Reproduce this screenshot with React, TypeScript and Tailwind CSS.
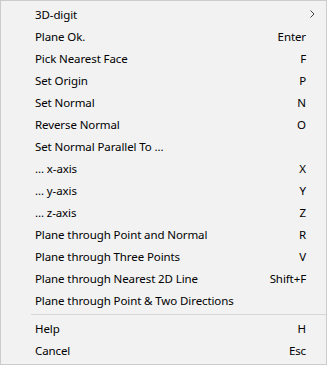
type Item = { label: string; key?: string; sub?: boolean } | 'sep';

const items: Item[] = [
  { label: '3D-digit', sub: true },
  { label: 'Plane Ok.', key: 'Enter' },
  { label: 'Pick Nearest Face', key: 'F' },
  { label: 'Set Origin', key: 'P' },
  { label: 'Set Normal', key: 'N' },
  { label: 'Reverse Normal', key: 'O' },
  { label: 'Set Normal Parallel To ...' },
  { label: '... x-axis', key: 'X' },
  { label: '... y-axis', key: 'Y' },
  { label: '... z-axis', key: 'Z' },
  { label: 'Plane through Point and Normal', key: 'R' },
  { label: 'Plane through Three Points', key: 'V' },
  { label: 'Plane through Nearest 2D Line', key: 'Shift+F' },
  { label: 'Plane through Point & Two Directions' },
  'sep',
  { label: 'Help', key: 'H' },
  { label: 'Cancel', key: 'Esc' },
];

export default function App() {
  return (
    <div
      className="w-[327px] h-[365px] bg-[#f2f2f2] border border-[#cccccc] pt-[2px] text-[11.5px] tracking-[-0.1px] text-black"
      style={{ fontFamily: '"Noto Sans", "Open Sans", sans-serif' }}
    >
      {items.map((item, i) =>
        item === 'sep' ? (
          <div key={i} className="h-[6px] flex items-center pl-[30px]">
            <div className="h-px w-full bg-[#d7d7d7]" />
          </div>
        ) : (
          <div key={i} className="relative h-[22px] flex items-center justify-between pl-[34px] pr-[20px] pt-px">
            <span>{item.label}</span>
            {item.key && <span>{item.key}</span>}
            {item.sub && (
              <svg className="absolute right-[11px] top-[7px]" width="5" height="8" viewBox="0 0 5 8">
                <path d="M0.5 0.5 L4 4 L0.5 7.5" fill="none" stroke="#444" strokeWidth="1" />
              </svg>
            )}
          </div>
        )
      )}
    </div>
  );
}
